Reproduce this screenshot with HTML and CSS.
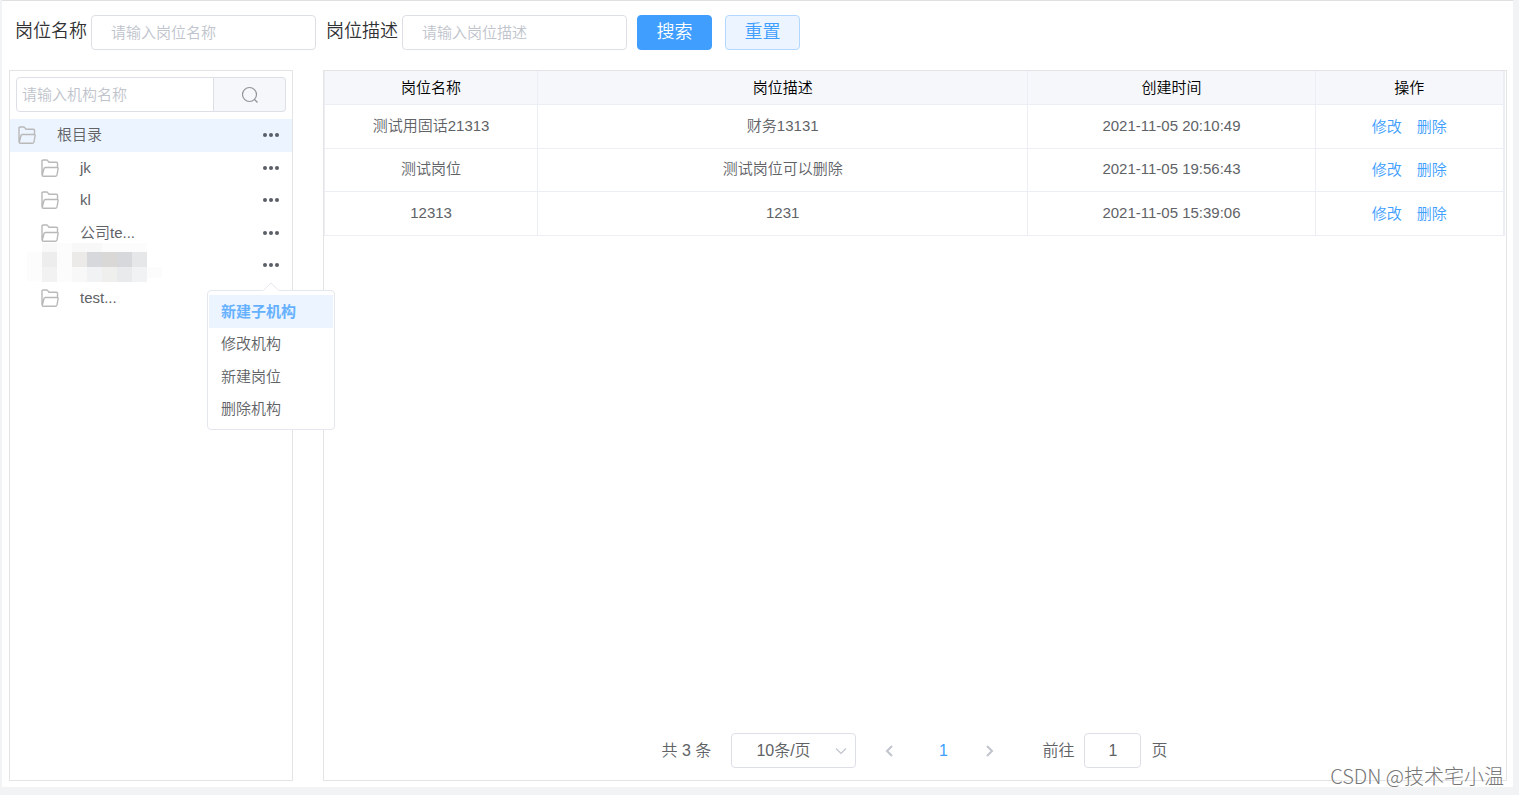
FILE: index.html
```html
<!DOCTYPE html>
<html lang="zh-CN">
<head>
<meta charset="utf-8">
<title>岗位管理</title>
<link rel="stylesheet" href="styles.css">
</head>
<body>
<svg class="sprite" aria-hidden="true">
  <symbol id="folder" viewBox="0 0 18 18">
    <path d="M1 16V2.200Q1 1 2.200 1H5.600Q6.300 1 6.700 1.600L8 3.200H15.400Q16.500 3.200 16.500 4.300V8.300M4.300 8.500H16.200Q17.300 8.500 17.100 9.600L16 16Q15.800 17.200 14.600 17.200H2.200Q1 17.200 1.300 16L3 9.500Q3.300 8.500 4.300 8.500Z" fill="none" stroke="#b9b9b9" stroke-width="1.400" stroke-linejoin="round"/>
  </symbol>
  <symbol id="dots" viewBox="0 0 16 4">
    <circle cx="2" cy="2" r="2"/><circle cx="8" cy="2" r="2"/><circle cx="14" cy="2" r="2"/>
  </symbol>
</svg>
<main class="page">
  <form class="search">
    <label class="field"><span>岗位名称</span><input type="text" placeholder="请输入岗位名称"></label>
    <label class="field"><span>岗位描述</span><input type="text" placeholder="请输入岗位描述"></label>
    <button class="btn btn-primary" type="button">搜索</button>
    <button class="btn btn-plain" type="button">重置</button>
  </form>
  <div class="content">
    <aside class="panel sidebar">
      <div class="org-search">
        <input type="text" placeholder="请输入机构名称" aria-label="机构名称">
        <button type="button" aria-label="搜索机构"><svg width="18" height="18" viewBox="0 0 18 18" fill="none" stroke="#909399" stroke-width="1.200"><circle cx="8.500" cy="8.500" r="7"/><path d="M13.500 13.500L16.500 16.500"/></svg></button>
      </div>
      <ul class="tree">
        <li class="node root"><svg class="folder"><use href="#folder"/></svg><span>根目录</span><button class="more" type="button" aria-label="更多"><svg><use href="#dots"/></svg></button></li>
        <li class="node"><svg class="folder"><use href="#folder"/></svg><span>jk</span><button class="more" type="button" aria-label="更多"><svg><use href="#dots"/></svg></button></li>
        <li class="node"><svg class="folder"><use href="#folder"/></svg><span>kl</span><button class="more" type="button" aria-label="更多"><svg><use href="#dots"/></svg></button></li>
        <li class="node"><svg class="folder"><use href="#folder"/></svg><span>公司te...</span><button class="more" type="button" aria-label="更多"><svg><use href="#dots"/></svg></button></li>
        <li class="node">
          <svg class="mosaic" width="135" height="39" viewBox="0 0 135 39" shape-rendering="crispEdges">
            <path fill="#fcfcfc" d="M0 9h15v29H0zM30 0h15v39H30zM60 0h60v9H60zM120 24h15v11h-15z"/>
            <path fill="#f8f8f8" d="M15 0h15v9H15zM45 0h30v9H45zM45 24h15v15H45z"/>
            <path fill="#ededee" d="M15 9h15v15H15z"/><path fill="#f2f2f2" d="M15 24h15v15H15z"/>
            <path fill="#eceae9" d="M45 9h15v15H45z"/><path fill="#d7d8dc" d="M60 9h15v15H60zM90 9h15v15H90z"/>
            <path fill="#dad8d6" d="M75 9h15v15H75z"/><path fill="#e6e7e9" d="M105 9h15v15h-15z"/>
            <path fill="#f1f2f4" d="M60 24h15v15H60zM105 24h15v15h-15z"/><path fill="#efefed" d="M75 24h15v15H75z"/><path fill="#e9eaec" d="M90 24h15v15H90z"/>
          </svg>
          <button class="more" type="button" aria-label="更多" aria-expanded="true"><svg><use href="#dots"/></svg></button>
          <div class="menu">
            <svg class="arrow" width="16" height="9" viewBox="0 0 16 9"><path d="M0 8.500L8 .5L16 8.500V9H0Z" fill="#fff"/><path d="M.5 8.500L8 1L15.500 8.500" fill="none" stroke="#e4e7ed"/></svg>
            <button class="active" type="button">新建子机构</button>
            <button type="button">修改机构</button>
            <button type="button">新建岗位</button>
            <button type="button">删除机构</button>
          </div>
        </li>
        <li class="node"><svg class="folder"><use href="#folder"/></svg><span>test...</span></li>
      </ul>
    </aside>
    <section class="panel main">
      <table class="grid">
        <colgroup><col class="c-name"><col class="c-desc"><col class="c-time"><col class="c-op"></colgroup>
        <thead><tr><th>岗位名称</th><th>岗位描述</th><th>创建时间</th><th>操作</th></tr></thead>
        <tbody>
          <tr><td>测试用固话21313</td><td>财务13131</td><td>2021-11-05 20:10:49</td><td><a href="#">修改</a><a href="#">删除</a></td></tr>
          <tr><td>测试岗位</td><td>测试岗位可以删除</td><td>2021-11-05 19:56:43</td><td><a href="#">修改</a><a href="#">删除</a></td></tr>
          <tr><td>12313</td><td>1231</td><td>2021-11-05 15:39:06</td><td><a href="#">修改</a><a href="#">删除</a></td></tr>
        </tbody>
      </table>
      <nav class="pagination">
        <span>共 3 条</span>
        <div class="size"><select aria-label="每页条数"><option>10条/页</option></select><svg width="12" height="8" viewBox="0 0 12 8" fill="none" stroke="#c0c4cc" stroke-width="1.200"><path d="M1 1.500L6 6.500L11 1.500"/></svg></div>
        <div class="pager">
          <button class="prev" type="button" aria-label="上一页"><svg width="8" height="12" viewBox="0 0 8 12" fill="none" stroke="#c0c4cc" stroke-width="2"><path d="M7 1L2 6L7 11"/></svg></button>
          <button class="current" type="button">1</button>
          <button class="next" type="button" aria-label="下一页"><svg width="8" height="12" viewBox="0 0 8 12" fill="none" stroke="#c0c4cc" stroke-width="2"><path d="M1 1L6 6L1 11"/></svg></button>
        </div>
        <label class="jump">前往<input type="text" value="1">页</label>
      </nav>
    </section>
  </div>
</main>
<div class="watermark">CSDN @技术宅小温</div>
</body>
</html>
```
FILE: styles.css
```css
* { box-sizing: border-box; }
body {
  margin: 0;
  height: 100vh;
  padding: 0 6px 8px 2px;
  display: flex;
  background: #f2f3f5;
  color: #606266;
  font-family: "Liberation Sans", "Noto Sans CJK SC", sans-serif;
  font-size: 15px;
  font-weight: 350;
}
button, input, select { font: inherit; color: inherit; margin: 0; }
button { padding: 0; border: 0; background: none; cursor: pointer; }
a { color: #409eff; text-decoration: none; }
input { border: 1px solid #dcdfe6; border-radius: 4px; background: #fff; outline: 0; min-width: 0; }
input::placeholder { color: #c0c4cc; opacity: 1; }
.sprite { position: absolute; width: 0; height: 0; }

.page {
  flex: 1;
  display: flex;
  flex-direction: column;
  gap: 20px;
  padding: 14px 6px 6px 7px;
  background: #fff;
  border-top: 1px solid #e0e0e0;
}
.search { display: flex; align-items: center; padding-left: 6px; }
.field { display: flex; align-items: center; gap: 5px; margin-right: 10px; color: #303133; font-size: 18px; line-height: 32px; }
.field span { align-self: flex-start; width: 71px; white-space: nowrap; }
.field input { width: 225px; height: 35px; padding: 0 19px; font-size: 15px; }
.btn { width: 75px; height: 35px; padding-bottom: 2px; border: 1px solid #409eff; border-radius: 4px; font-size: 18px; line-height: 30px; }
.btn-primary { background: #409eff; color: #fff; }
.btn-plain { margin-left: 13px; background: #ecf5ff; border-color: #b3d8ff; color: #409eff; }

.content { flex: 1; display: flex; gap: 30px; }
.panel { border: 1px solid #e4e4e4; }
.sidebar { width: 284px; padding-top: 6px; }
.org-search { display: flex; height: 35px; margin: 0 6px; }
.org-search input { flex: 1; padding: 0 5px; border-radius: 4px 0 0 4px; }
.org-search button { display: flex; align-items: center; justify-content: center; width: 72px; border: 1px solid #dcdfe6; border-left: 0; border-radius: 0 4px 4px 0; background: #f5f7fa; }

.tree { display: grid; grid-auto-rows: 1fr; height: 195px; margin: 7px 0 0; padding: 0; list-style: none; }
.node { position: relative; display: flex; align-items: center; padding: 0 13px 0 31px; }
.node > span { line-height: 20px; }
.node.root { padding-left: 8px; background: #ecf4ff; }
.folder { width: 18px; height: 18px; margin-right: 21px; }
.more { display: flex; margin-left: auto; }
.more svg { width: 16px; height: 4px; fill: #5a5e66; }
.mosaic { position: absolute; left: 17px; top: -6px; }

.menu {
  position: absolute;
  z-index: 2;
  top: 41px;
  right: -43px;
  display: grid;
  grid-auto-rows: 1fr;
  width: 128px;
  height: 140px;
  padding: 4px 1px;
  background: #fff;
  border: 1px solid #e4e7ed;
  border-radius: 4px;
}
.menu button { padding: 0 0 2px 12px; text-align: left; }
.menu .active { background: #ecf5ff; color: #66b1ff; font-weight: 700; }
.arrow { position: absolute; top: -9px; left: 55px; }

.main { flex: 1; display: flex; flex-direction: column; justify-content: space-between; padding-right: 1px; }
.grid { width: 100%; table-layout: fixed; border-collapse: separate; border-spacing: 0; border: solid #ebeef5; border-width: 0 2px 0 1px; text-align: center; }
.c-name { width: 18.1%; }
.c-desc { width: 41.6%; }
.c-time { width: 24.4%; }
.c-op { width: 15.9%; }
.grid th, .grid td { padding: 0; border: 0 solid #ebeef5; border-width: 0 1px 1px 0; line-height: 22px; }
.grid th:last-child, .grid td:last-child { border-right: 0; }
.grid th { height: 34px; background: #f5f7fa; color: #000; font-weight: inherit; }
.grid td { height: 44px; padding-bottom: 2px; }
.grid td:last-child { padding-bottom: 0; }
.grid tr:nth-child(even) td { height: 43px; }
.grid a + a { margin-left: 15px; }

.pagination { display: flex; align-items: center; justify-content: center; padding-bottom: 12px; font-size: 16px; line-height: 24px; }
.size { position: relative; margin-left: 20px; }
.size select { display: block; width: 125px; height: 35px; padding: 0 24px; border: 1px solid #dcdfe6; border-radius: 4px; background: #fff; appearance: none; }
.size svg { position: absolute; right: 9px; top: 14px; pointer-events: none; }
.pager { display: flex; gap: 8px; margin: 0 36px 0 10px; }
.pager button { display: flex; align-items: center; justify-content: center; height: 35px; }
.pager .prev { width: 46px; }
.pager .current { width: 46px; color: #409eff; }
.pager .next { width: 32px; }
.jump { display: flex; align-items: center; gap: 10px; }
.jump input { width: 57px; height: 35px; text-align: center; }

.watermark {
  position: absolute;
  right: 15px;
  bottom: 5px;
  color: #777;
  font-family: "Noto Sans CJK SC", sans-serif;
  font-size: 20px;
  font-weight: 300;
  line-height: 28px;
  text-shadow: -1px -1px 0 #fff;
}
```
